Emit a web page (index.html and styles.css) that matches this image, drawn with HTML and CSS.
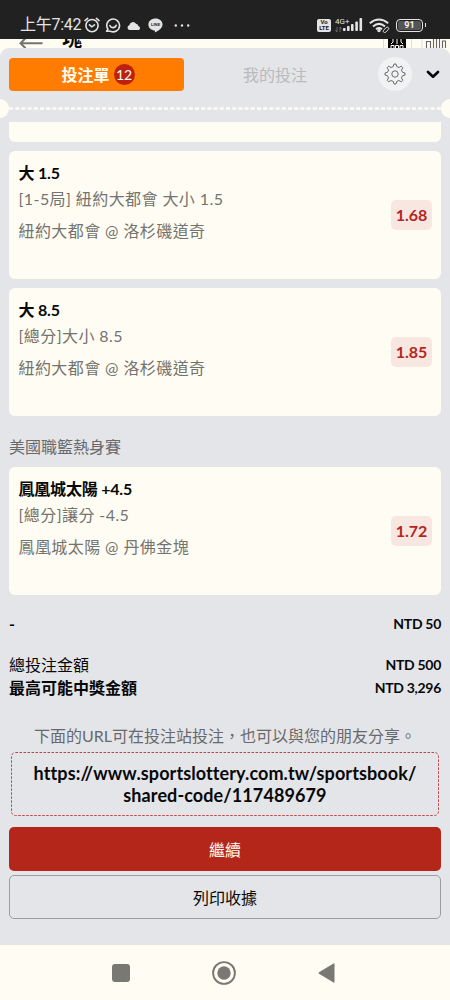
FILE: index.html
```html
<!DOCTYPE html>
<html lang="zh-Hant">
<head>
<meta charset="utf-8">
<title>投注單</title>
<link rel="stylesheet" href="styles.css">
</head>
<body>
<div class="phone">
  <header class="status">
    <div class="status-left">
      <span class="clock">上午7:42</span>
      <svg class="ic-alarm" width="16" height="16" viewBox="0 0 16 16" fill="none" stroke="#e4e4e4" stroke-width="1.6" stroke-linecap="round"><circle cx="8" cy="8.6" r="6.100"/><path d="M1 3.6 3.6 1.4M15 3.6 12.4 1.4M5.5 7.8 7.8 9.8 10.5 7.9"/></svg>
      <svg class="ic-chat" width="16" height="16" viewBox="0 0 16 16" fill="none" stroke="#e4e4e4" stroke-width="1.6" stroke-linecap="round"><path d="M1.6 14.2 3 12.2A6.4 6.4 0 1 1 5.4 14.2Z" stroke-linejoin="round"/><path d="M4.9 8.6C5.8 11.4 10.2 11.4 11.2 8.3"/></svg>
      <svg class="ic-cloud" width="14" height="9" viewBox="0 0 14 9" fill="#e4e4e4"><path d="M2.5 9A2.4 2.4 0 0 1 2.4 4.3 3.6 3.6 0 0 1 9 2.7 3.2 3.2 0 0 1 11.5 5.2 2 2 0 0 1 11.8 9Z"/></svg>
      <svg class="ic-line" width="15" height="15" viewBox="0 0 15 15"><path d="M7.5.6C3.5.6.4 3.1.4 6.5c0 3.200 2.5 5.500 6 5.9.8.2.6 1 .4 2.2 2.8-1.2 7.7-4.2 7.7-8.1C14.5 3.1 11.5.6 7.5.6Z" fill="#e4e4e4"/><text x="7.5" y="8" text-anchor="middle" class="line-label">LINE</text></svg>
      <svg class="ic-dots" width="16" height="3" viewBox="0 0 16 3" fill="#e4e4e4"><circle cx="1.8" cy="1.5" r="1.2"/><circle cx="8" cy="1.5" r="1.2"/><circle cx="14.2" cy="1.5" r="1.2"/></svg>
    </div>
    <div class="status-right">
      <span class="volte"><span>Vo</span><span>LTE</span></span>
      <span class="net"><span>4G+</span><svg width="7" height="5" viewBox="0 0 7 5" fill="none" stroke="#777" stroke-width=".8"><path d="M2 0V5L.4 3M5 5V0L6.6 2"/></svg></span>
      <svg class="ic-signal" width="20" height="14" viewBox="0 0 20 14" fill="#e4e4e4"><rect x="0" y="10" width="2.6" height="3" rx=".8"/><rect x="4" y="8" width="2.6" height="5" rx=".8"/><rect x="8" y="6" width="2.6" height="7" rx=".8"/><rect x="12.300" y="3.5" width="2.6" height="9.5" rx=".8"/><rect x="16.500" y="0" width="2.6" height="13" rx=".8"/></svg>
      <svg class="ic-wifi" width="22" height="15" viewBox="0 0 22 15" fill="none" stroke="#e4e4e4" stroke-width="2"><path d="M.8 5.2Q10-2.2 19.200 5.2M4 8.4Q10 3.4 16 8.4M7 11.2Q10 8.800 13 11.200"/><circle cx="10" cy="12.5" r=".8"/><path d="M14.500 12.400l2.600-2.800q1.200-.9 2.200 0t0 2l-2.600 2.600q-1.200.8-2 0t-.2-1.800Z" stroke-width="1"/></svg>
      <span class="battery"><span class="battery-fill">91</span></span>
    </div>
  </header>

  <div class="app-strip">
    <svg width="24" height="9" viewBox="0 0 24 9" fill="none" stroke="#74736f" stroke-width="2"><path d="M23.5 4.200H1.5M6.500-.8 1.5 4.200 6.500 9.200"/></svg>
    <span class="app-title">塊</span>
    <svg class="strip-icons" width="65" height="9" viewBox="0 0 65 9"><path d="M1.5 0V9M29.5 0V9M40 0V9" stroke="#ddd"/><rect x="6" width="18" height="9" fill="#080808"/><path d="M9 9V6.500h3V9M13.500 9V6.500h3V9M18 9V6.500h3V9M11 0v3L9 5M15 0v5M19 0v3l2 2" stroke="#fffdf3" fill="none"/><path d="M44.500 9V2.500h4V9M51.500 9V0M54.500 9V0M57.500 9V0M60.500 9V2h3V9" stroke="#666" stroke-width="1.1" fill="none"/></svg>
  </div>

  <main class="sheet">
    <nav class="tabs">
      <div class="tab tab-active"><span>投注單</span><span class="count">12</span></div>
      <div class="tab tab-idle">我的投注</div>
      <div class="gear"><svg width="22" height="22" viewBox="0 0 22 22" fill="none" stroke="#686a6d" stroke-width="1" stroke-linejoin="round"><circle cx="11" cy="11" r="3.2"/><path d="M9.2 3.6 10 1h2l.8 2.6 2.1.9 2.4-1.3 1.5 1.5-1.3 2.4.9 2.1 2.6.8v2l-2.6.8-.9 2.1 1.3 2.4-1.5 1.5-2.4-1.3-2.1.9L12 21h-2l-.8-2.6-2.1-.9-2.4 1.3-1.5-1.5 1.3-2.4-.9-2.1L1 12v-2l2.6-.8.9-2.1-1.3-2.4 1.5-1.5 2.4 1.3Z"/></svg></div>
      <svg class="chev" width="14" height="9" viewBox="0 0 14 9" fill="none" stroke="#080808" stroke-width="2.7" stroke-linecap="round" stroke-linejoin="round"><path d="M2 2 7 6.7 12 2"/></svg>
    </nav>
    <div class="perforation"><i class="notch"></i><svg class="dashes" height="3" viewBox="0 0 432 3" preserveAspectRatio="none"><path d="M0 1.5H432" stroke="#fffdf3" stroke-width="2.6" stroke-dasharray="4 2.2"/></svg><i class="notch"></i></div>

    <section class="bets">
      <div class="card card-cut"></div>
      <article class="card">
        <div class="info"><h3>大 1.5</h3><p>[1-5局] 紐約大都會 大小 1.5</p><p class="match">紐約大都會 @ 洛杉磯道奇</p></div>
        <span class="odds">1.68</span>
      </article>
      <article class="card">
        <div class="info"><h3>大 8.5</h3><p>[總分]大小 8.5</p><p class="match">紐約大都會 @ 洛杉磯道奇</p></div>
        <span class="odds">1.85</span>
      </article>
      <h2 class="league">美國職籃熱身賽</h2>
      <article class="card">
        <div class="info"><h3>鳳凰城太陽 +4.5</h3><p>[總分]讓分 -4.5</p><p class="match">鳳凰城太陽 @ 丹佛金塊</p></div>
        <span class="odds">1.72</span>
      </article>
    </section>

    <section class="totals">
      <div class="row row-first"><b>-</b><b class="amount">NTD 50</b></div>
      <div class="row"><span>總投注金額</span><b class="amount">NTD 500</b></div>
      <div class="row"><b>最高可能中獎金額</b><b class="amount">NTD 3,296</b></div>
    </section>

    <p class="hint">下面的URL可在投注站投注，也可以與您的朋友分享。</p>
    <div class="share"><svg class="share-border" width="428" height="64"><rect x=".5" y=".5" width="427" height="63" rx="4" fill="none" stroke="#c0424a" stroke-dasharray="2.5 1.5"/></svg><span>https://www.sportslottery.com.tw/sportsbook/<br>shared-code/117489679</span></div>
    <div class="btn btn-primary">繼續</div>
    <div class="btn btn-outline">列印收據</div>
  </main>

  <footer class="navbar">
    <svg width="18" height="18" viewBox="0 0 18 18"><rect width="18" height="18" rx="3" fill="#7a7873"/></svg>
    <svg width="24" height="24" viewBox="0 0 24 24"><circle cx="12" cy="12" r="10.9" fill="none" stroke="#7a7873" stroke-width="1.9"/><circle cx="12" cy="12" r="6.7" fill="#7a7873"/></svg>
    <svg width="17" height="20" viewBox="0 0 17 20"><path d="M1 9.3 15.5.5Q16.5 0 16.5 1V19Q16.5 20 15.5 19.5L1 10.7Q0 10 1 9.3Z" fill="#7a7873"/></svg>
  </footer>
</div>
</body>
</html>
```
FILE: styles.css
```css
* { box-sizing: border-box; margin: 0; padding: 0; }
body { font-family: Lato, "Noto Sans CJK TC", sans-serif; font-size: 16px; color: #080808; background: #fffdf3; }
svg { display: block; flex: none; }
.phone { width: 450px; height: 1000px; display: flex; flex-direction: column; overflow: hidden; background: #fffdf3; }

.status { height: 39px; flex: none; background: #212121; color: #e4e4e4; display: flex; justify-content: space-between; padding: 11px 27px 0 20px; }
.status-left, .status-right { display: flex; align-items: center; height: 28px; }
.clock { font: 16px/28px Roboto, "Noto Sans CJK TC", sans-serif; width: 61px; letter-spacing: -.25px; white-space: nowrap; }
.ic-alarm { margin-left: 3px; }
.ic-chat { margin-left: 5px; }
.ic-cloud { margin-left: 6px; }
.ic-line { margin-left: 7px; }
.line-label { font: bold 4px "Liberation Sans", sans-serif; fill: #212121; }
.ic-dots { margin-left: 11px; }
.volte { width: 14px; height: 13px; border-radius: 2px; background: #e4e4e4; color: #212121; font: bold 6px/6px Roboto, sans-serif; display: flex; flex-direction: column; align-items: center; }
.net { width: 16px; margin: 0 -8px 0 4px; height: 15px; font: 8px/8px Roboto, sans-serif; display: flex; flex-direction: column; gap: 1px; }
.ic-signal { margin-right: 6px; }
.ic-wifi { margin-right: 5px; }
.battery { position: relative; width: 27px; height: 13px; border: 1.5px solid #e4e4e4; border-radius: 4px; padding: 1px; }
.battery::after { content: ""; position: absolute; right: -4px; top: 3px; width: 1.5px; height: 4px; background: #e4e4e4; }
.battery-fill { display: block; background: #555; border-radius: 2px; height: 9px; font: bold 9px/9px Roboto, sans-serif; text-align: center; color: #f2f2f2; }

.app-strip { height: 9px; flex: none; display: flex; align-items: flex-start; overflow: hidden; padding-left: 19px; }
.app-title { font-weight: 700; font-size: 20px; line-height: 20px; margin: -11px 0 0 19px; }
.strip-icons { margin-left: auto; margin-right: 3px; }

.sheet { height: 897px; flex: none; overflow: hidden; background: #e4e5e8; border-radius: 9px 9px 0 0; padding-top: 9px; }
.tabs { display: flex; align-items: center; height: 34px; padding: 0 9px; }
.tab { display: flex; align-items: center; justify-content: center; height: 33px; }
.tab-active { width: 175px; background: #ff7c00; color: #fffdf3; border-radius: 4px; gap: 4px; font-weight: 700; padding-left: 3px; }
.count { width: 21px; height: 21px; border-radius: 50%; background: #bd200c; font-size: 14px; line-height: 21px; text-align: center; font-weight: 400; }
.tab-idle { width: 182px; color: #b9babc; }
.gear { width: 34px; height: 34px; border-radius: 50%; background: #f1f2f4; display: flex; align-items: center; justify-content: center; margin-left: 12px; }
.chev { margin-left: 14px; }
.perforation { display: flex; align-items: center; height: 19px; margin: 8px -9px 0; }
.notch { width: 18px; height: 19px; border-radius: 50%; background: #fffdf3; flex: none; }
.dashes { flex: 1; min-width: 0; }

.bets { padding: 4px 9px 0; display: flex; flex-direction: column; gap: 9px; }
.card { height: 128px; background: #fffdf3; border-radius: 6px; padding: 10px 9px 0; display: flex; justify-content: space-between; }
.card-cut { height: 20px; border-radius: 0 0 6px 6px; }
.info { padding-left: .5px; }
.info h3 { font-size: 16px; line-height: 23px; letter-spacing: -.2px; }
.info p { font-size: 16px; line-height: 24px; margin-top: 3px; color: #73736f; letter-spacing: .42px; }
.info .match { margin-top: 8px; }
.odds { width: 41px; height: 30px; margin-top: 39px; border-radius: 5px; background: #f8e6e1; color: #b3261e; font-weight: 700; line-height: 30px; text-align: center; }
.league { font-size: 16px; font-weight: 400; line-height: 24px; color: #68696c; margin: 10px 0 -1px; }

.totals { padding: 17px 9px 0; }
.row { display: flex; justify-content: space-between; line-height: 23px; height: 23px; }
.row-first { margin-bottom: 18px; }
.amount { font-size: 14px; letter-spacing: -.3px; }
.hint { margin-top: 25px; line-height: 24px; text-align: center; color: #68696c; white-space: nowrap; }
.share { position: relative; width: 428px; height: 64px; margin: 4px 0 0 11px; padding-top: 10px; text-align: center; font-size: 18px; line-height: 22px; font-weight: 700; letter-spacing: .1px; }
.share-border { position: absolute; left: 0; top: 0; }
.btn { height: 44px; margin: 0 9px; border-radius: 5px; display: flex; align-items: center; justify-content: center; }
.btn-primary { margin-top: 11px; background: #b4251a; color: #fffdf3; }
.btn-outline { margin-top: 4px; border: 1px solid #9a9da2; }

.navbar { height: 55px; display: flex; align-items: center; padding: 0 115px 0 112px; justify-content: space-between; }
```
